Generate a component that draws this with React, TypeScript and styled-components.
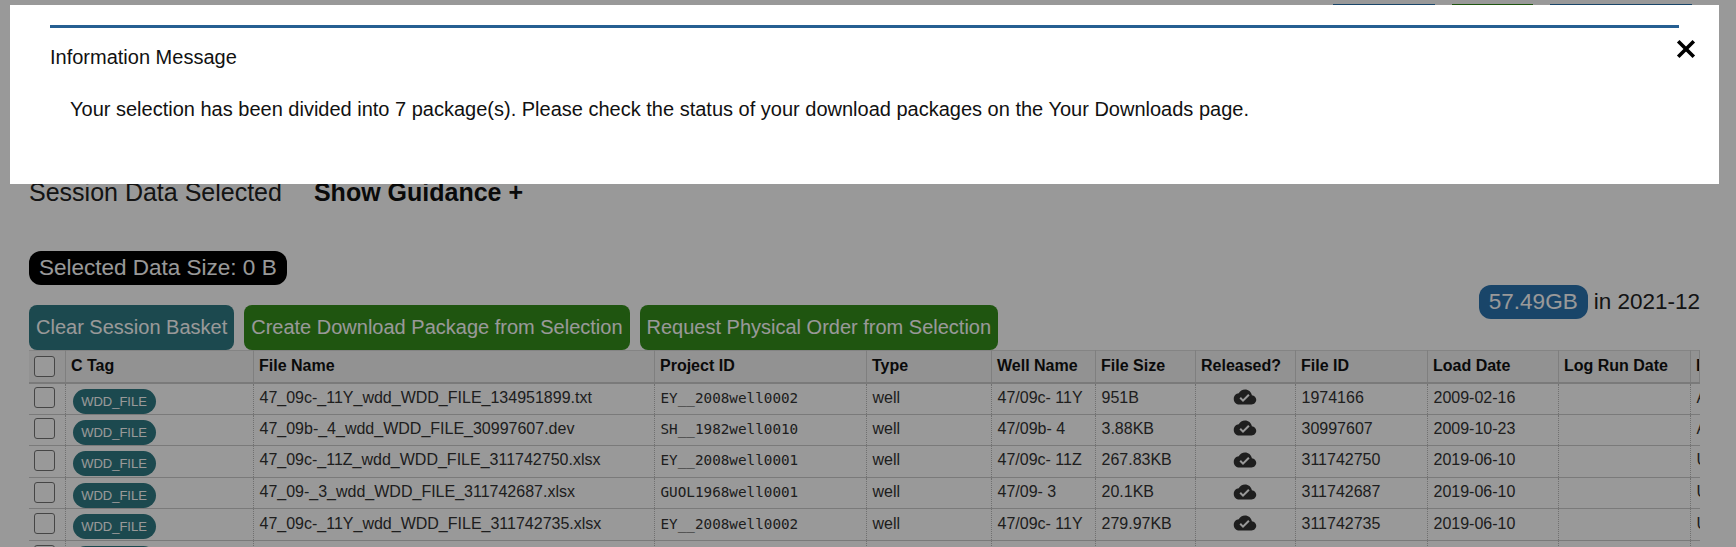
import React from 'react';
import styled, { createGlobalStyle } from 'styled-components';
import { IoMdCloudDone } from 'react-icons/io';

const Global = createGlobalStyle`
  html, body { margin: 0; padding: 0; background: #fff; overflow: hidden; }
  body { font-family: "Liberation Sans", Arial, sans-serif; color: #222; }
`;

const Page = styled.div`
  width: 1736px;
  height: 547px;
  overflow: hidden;
  padding: 0 36px 0 29px;
  box-sizing: border-box;
`;

const TopBar = styled.div`
  height: 5px;
  overflow: hidden;
  display: flex;
  justify-content: flex-end;
  align-items: flex-end;
  gap: 17px;
  padding-right: 8px;
`;

const TopButton = styled.div<{ $w: number; $bg: string }>`
  width: ${(p) => p.$w}px;
  height: 1px;
  flex: none;
  background: ${(p) => p.$bg};
`;

const Heading = styled.div`
  display: flex;
  align-items: baseline;
  gap: 32px;
  margin-top: 173px;
  height: 73px;
  font-size: 25px;
  line-height: 28px;
`;

const GuidanceLink = styled.span`
  font-weight: 700;
  color: #111;
`;

const Controls = styled.div`
  display: flex;
  justify-content: space-between;
  align-items: flex-start;
`;

const ControlsLeft = styled.div`
  display: flex;
  flex-direction: column;
  align-items: flex-start;
  gap: 20px;
`;

const SizePill = styled.div`
  height: 34px;
  line-height: 34px;
  padding: 0 10px;
  border-radius: 12px;
  background: #000;
  color: #fff;
  font-size: 22.5px;
`;

const ButtonRow = styled.div`
  display: flex;
  gap: 10px;
`;

const ActionButton = styled.button<{ $bg: string }>`
  height: 45px;
  padding: 0 7px;
  border: 0;
  border-radius: 8px;
  background: ${(p) => p.$bg};
  color: #fff;
  font-family: inherit;
  font-size: 20px;
`;

const Usage = styled.div`
  display: flex;
  align-items: center;
  gap: 6px;
  margin-top: 34px;
  font-size: 22.5px;
`;

const UsageBadge = styled.span`
  height: 34px;
  line-height: 34px;
  padding: 0 10px;
  border-radius: 12px;
  background: #2b73af;
  color: #fff;
`;

const TableClip = styled.div`
  position: relative;
  width: 1671px;
  overflow: hidden;
  &::after {
    content: '';
    position: absolute;
    top: 0;
    right: 0;
    width: 1px;
    height: 32px;
    background: #d4d4d4;
  }
`;

const Table = styled.table`
  table-layout: fixed;
  border-collapse: collapse;
  width: 1773px;
  font-size: 16px;
`;

const Th = styled.th`
  height: 32px;
  box-sizing: border-box;
  padding: 0 6px 0 5.5px;
  text-align: left;
  font-weight: 700;
  color: #111;
  background: #f3f3f3;
  border-top: 1px solid #ddd;
  border-bottom: 2px solid #ccc;
  border-right: 1px solid #d4d4d4;
  white-space: nowrap;
  overflow: hidden;
`;

const Td = styled.td<{ $center?: boolean; $mono?: boolean }>`
  height: 31.6px;
  box-sizing: border-box;
  padding: 0 6px 2px;
  border-bottom: 1px solid #ccc;
  border-right: 1px dotted #bbb;
  white-space: nowrap;
  overflow: hidden;
  text-align: ${(p) => (p.$center ? 'center' : 'left')};
  color: #333;
  ${(p) =>
    p.$mono
      ? `font-family: "DejaVu Sans Mono", "Liberation Mono", monospace; font-size: 14.3px;`
      : ''}
`;

const TagCell = styled(Td)`
  padding: 0 6px;
  vertical-align: top;
`;

const Check = styled.span`
  display: block;
  box-sizing: border-box;
  width: 21px;
  height: 21px;
  margin-left: -1px;
  border: 1px solid #767676;
  border-radius: 3px;
  background: #fff;
`;

const TagPill = styled.span`
  display: block;
  width: 83px;
  height: 25px;
  line-height: 25px;
  margin: 5px 0 0 1px;
  border-radius: 12.5px;
  background: #2f7b84;
  color: #fff;
  font-size: 13px;
  text-align: center;
`;

const CloudIcon = styled(IoMdCloudDone)`
  display: block;
  width: 24px;
  height: 24px;
  margin: -1px auto 0;
  color: #333;
`;

const Overlay = styled.div`
  position: fixed;
  inset: 0;
  background: rgba(0, 0, 0, 0.4);
`;

const Modal = styled.div`
  position: fixed;
  top: 5px;
  left: 10px;
  width: 1709px;
  height: 179px;
  padding: 20px 40px 0;
  box-sizing: border-box;
  background: #fff;
`;

const ModalHeader = styled.div`
  border-top: 3px solid #265f92;
  padding-top: 18px;
  font-size: 20px;
  line-height: 23px;
  color: #111;
`;

const ModalMessage = styled.p`
  margin: 29px 0 0 20px;
  font-size: 20px;
  line-height: 23px;
  color: #111;
`;

const CloseButton = styled.button`
  position: absolute;
  top: 34px;
  right: 23px;
  width: 20px;
  height: 20px;
  padding: 0;
  border: 0;
  background: none;
  color: #000;
`;

const columns = [36, 188, 401, 212, 125, 104, 100, 100, 132, 131, 132, 112];
const headers = ['C Tag', 'File Name', 'Project ID', 'Type', 'Well Name', 'File Size', 'Released?', 'File ID', 'Load Date', 'Log Run Date', 'Log Type'];

type Row = { name: string; project: string; well: string; size: string; id: string; date: string; last: string };
const rows: Row[] = [
  { name: '47_09c-_11Y_wdd_WDD_FILE_134951899.txt', project: 'EY__2008well0002', well: '47/09c- 11Y', size: '951B', id: '1974166', date: '2009-02-16', last: 'A' },
  { name: '47_09b-_4_wdd_WDD_FILE_30997607.dev', project: 'SH__1982well0010', well: '47/09b- 4', size: '3.88KB', id: '30997607', date: '2009-10-23', last: 'A' },
  { name: '47_09c-_11Z_wdd_WDD_FILE_311742750.xlsx', project: 'EY__2008well0001', well: '47/09c- 11Z', size: '267.83KB', id: '311742750', date: '2019-06-10', last: 'U' },
  { name: '47_09-_3_wdd_WDD_FILE_311742687.xlsx', project: 'GUOL1968well0001', well: '47/09- 3', size: '20.1KB', id: '311742687', date: '2019-06-10', last: 'U' },
  { name: '47_09c-_11Y_wdd_WDD_FILE_311742735.xlsx', project: 'EY__2008well0002', well: '47/09c- 11Y', size: '279.97KB', id: '311742735', date: '2019-06-10', last: 'U' },
  { name: '', project: '', well: '', size: '', id: '', date: '', last: '' },
];

export default function App() {
  return (
    <>
      <Global />
      <Page>
        <TopBar>
          <TopButton $w={102} $bg="#2b73af" />
          <TopButton $w={81} $bg="#348e1b" />
          <TopButton $w={142} $bg="#2b73af" />
        </TopBar>
        <Heading>
          <span>Session Data Selected</span>
          <GuidanceLink>Show Guidance +</GuidanceLink>
        </Heading>
        <Controls>
          <ControlsLeft>
            <SizePill>Selected Data Size: 0 B</SizePill>
            <ButtonRow>
              <ActionButton $bg="#2f7b84">Clear Session Basket</ActionButton>
              <ActionButton $bg="#348e1b">Create Download Package from Selection</ActionButton>
              <ActionButton $bg="#348e1b">Request Physical Order from Selection</ActionButton>
            </ButtonRow>
          </ControlsLeft>
          <Usage>
            <UsageBadge>57.49GB</UsageBadge>
            <span>in 2021-12</span>
          </Usage>
        </Controls>
        <TableClip>
          <Table>
            <colgroup>
              {columns.map((w, i) => (
                <col key={i} width={w} />
              ))}
            </colgroup>
            <thead>
              <tr>
                <Th><Check /></Th>
                {headers.map((h) => (
                  <Th key={h}>{h}</Th>
                ))}
              </tr>
            </thead>
            <tbody>
              {rows.map((r, i) => (
                <tr key={i}>
                  <Td><Check /></Td>
                  <TagCell><TagPill>WDD_FILE</TagPill></TagCell>
                  <Td>{r.name}</Td>
                  <Td $mono>{r.project}</Td>
                  <Td>{r.name ? 'well' : ''}</Td>
                  <Td>{r.well}</Td>
                  <Td>{r.size}</Td>
                  <Td $center><CloudIcon /></Td>
                  <Td>{r.id}</Td>
                  <Td>{r.date}</Td>
                  <Td />
                  <Td>{r.last}</Td>
                </tr>
              ))}
            </tbody>
          </Table>
        </TableClip>
      </Page>
      <Overlay />
      <Modal>
        <ModalHeader>Information Message</ModalHeader>
        <ModalMessage>
          Your selection has been divided into 7 package(s). Please check the status of your download packages on the Your Downloads page.
        </ModalMessage>
        <CloseButton aria-label="Close">
          <svg width="20" height="20" viewBox="0 0 20 20">
            <path d="M2.2 2.2 L17.8 17.8 M17.8 2.2 L2.2 17.8" stroke="currentColor" strokeWidth="3.6" fill="none" />
          </svg>
        </CloseButton>
      </Modal>
    </>
  );
}
